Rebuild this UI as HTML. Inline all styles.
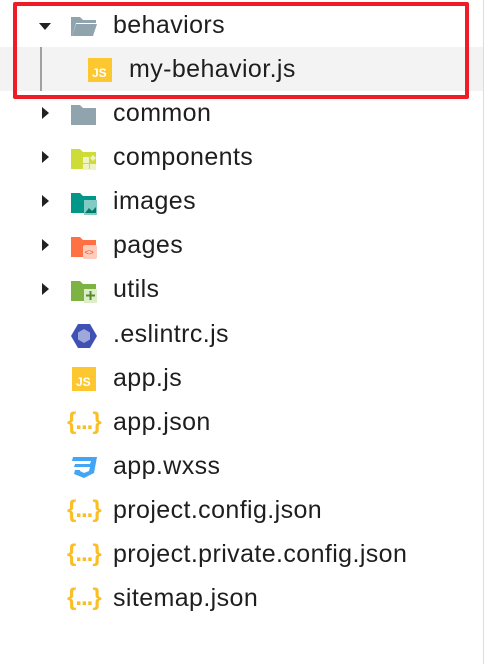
<!DOCTYPE html>
<html><head><meta charset="utf-8"><style>
body{margin:0;width:485px;height:664px;background:#fff;position:relative;overflow:hidden;font-family:"Liberation Sans",sans-serif;color:#1e1e1e}
.row{position:absolute;left:0;width:483px;height:44px}
.t{position:absolute;left:113px;top:7px;font-size:25px;letter-spacing:0.4px;line-height:28px;white-space:nowrap}
.ic{position:absolute;left:70px;top:10px;width:28px;height:26px}
.arr{position:absolute;left:42px;top:15px;width:0;height:0}
.r{border-top:6px solid transparent;border-bottom:6px solid transparent;border-left:7px solid #222}
.d{left:39px;top:19px;border-left:6px solid transparent;border-right:6px solid transparent;border-top:7px solid #222}
.js{position:absolute;background:#fdc82f;color:#fff;font-weight:bold;font-size:12px;width:24px;height:24px;box-sizing:border-box;padding:9px 0 0 4px;line-height:13px}
.br{position:absolute;left:67px;top:7px;color:#fbbf24;font-size:24px;font-weight:bold;letter-spacing:-1px}
</style></head><body>
<div style="position:absolute;left:0;top:47px;width:483px;height:44px;background:#f3f3f3"></div>
<div style="position:absolute;left:40px;top:47px;width:2px;height:44px;background:#a0a0a0"></div>
<div style="position:absolute;left:483px;top:0;width:1px;height:664px;background:#ddd"></div>

<div class="row" style="top:4px"><div class="arr d"></div>
<svg class="ic" viewBox="0 0 28 26"><path d="M1 3h9l3 3h13v3H6L2 22H1z" fill="#90a4ae"/><path d="M6 10h21l-4 12H2z" fill="#90a4ae"/></svg>
<div class="t">behaviors</div></div>

<div class="row" style="top:48px"><div class="js" style="left:88px;top:10px">JS</div><div class="t" style="left:129px">my-behavior.js</div></div>

<div class="row" style="top:92px"><div class="arr r"></div>
<svg class="ic" viewBox="0 0 28 26"><path d="M1 3h9l3 3h13v17H1z" fill="#90a4ae"/></svg><div class="t">common</div></div>

<div class="row" style="top:136px"><div class="arr r"></div>
<svg class="ic" viewBox="0 0 28 26"><path d="M1 3h9l3 3h13v17H1z" fill="#cddc39"/><rect x="13" y="11" width="6" height="6" fill="#f0f4c3"/><rect x="13" y="18" width="6" height="6" fill="#f0f4c3"/><rect x="20" y="18" width="6" height="6" fill="#f0f4c3"/><path d="M23 9l3 3-3 3-3-3z" fill="#f0f4c3"/></svg><div class="t">components</div></div>

<div class="row" style="top:180px"><div class="arr r"></div>
<svg class="ic" viewBox="0 0 28 26"><path d="M1 3h9l3 3h13v17H1z" fill="#009688"/><rect x="14" y="10" width="13" height="15" fill="#80cbc4"/><path d="M15 23l4-5 3 3 4-4v6z" fill="#00796b"/></svg><div class="t">images</div></div>

<div class="row" style="top:224px"><div class="arr r"></div>
<svg class="ic" viewBox="0 0 28 26"><path d="M1 3h9l3 3h13v17H1z" fill="#ff7043"/><rect x="13" y="11" width="14" height="14" rx="2" fill="#ffccbc"/><text x="14.5" y="21" font-size="8" fill="#e64a19" font-family="Liberation Sans">&lt;&gt;</text></svg><div class="t">pages</div></div>

<div class="row" style="top:268px"><div class="arr r"></div>
<svg class="ic" viewBox="0 0 28 26"><path d="M1 3h9l3 3h13v17H1z" fill="#7cb342"/><rect x="14" y="11" width="13" height="14" fill="#dcedc8"/><path d="M20.5 13v9M16 17.5h9" stroke="#558b2f" stroke-width="2"/></svg><div class="t">utils</div></div>

<div class="row" style="top:313px">
<svg class="ic" viewBox="0 0 28 26"><path d="M8 1h12l7 12-7 12H8L1 13z" fill="#3f51b5"/><path d="M14 6l6 3.5v7L14 20l-6-3.5v-7z" fill="#9fa8da"/></svg><div class="t">.eslintrc.js</div></div>

<div class="row" style="top:357px"><div class="js" style="left:72px;top:10px">JS</div><div class="t">app.js</div></div>

<div class="row" style="top:401px"><div class="br">{...}</div><div class="t">app.json</div></div>

<div class="row" style="top:445px">
<svg class="ic" viewBox="0 0 28 26"><path d="M3 2h24l-3 16-10 5-10-4 1-4h5l0 1 4 2 5-2 1-4H4l1-3h15l1-3H2z" fill="#42a5f5"/></svg><div class="t">app.wxss</div></div>

<div class="row" style="top:489px"><div class="br">{...}</div><div class="t">project.config.json</div></div>
<div class="row" style="top:533px"><div class="br">{...}</div><div class="t">project.private.config.json</div></div>
<div class="row" style="top:577px"><div class="br">{...}</div><div class="t">sitemap.json</div></div>

<div style="position:absolute;left:13px;top:2px;width:448px;height:89px;border:4px solid #ee1c25;border-radius:2px"></div>
</body></html>
